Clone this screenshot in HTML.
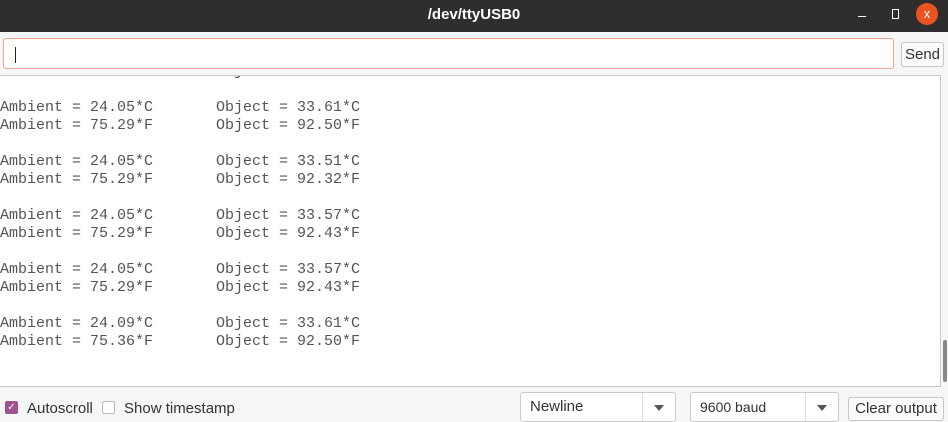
<!DOCTYPE html>
<html><head><style>
body{margin:0;width:948px;height:422px;overflow:hidden;background:#f5f6f7;font-family:"Liberation Sans",sans-serif;position:relative}
.title{position:absolute;left:0;top:0;width:948px;height:32px;background:#2f2d2d;color:#fff;font-weight:bold;font-size:15px;text-align:center;line-height:30px}
.inp{position:absolute;left:3px;top:38px;width:891px;height:31px;background:#fff;border:1px solid #f2a58e;border-radius:3px;box-sizing:border-box}
.caret{position:absolute;left:11px;top:8px;width:1px;height:16px;background:#222}
.btn{position:absolute;background:#fafafa;border:1px solid #c8c8c8;border-radius:3px;color:#333;font-size:15px;box-sizing:border-box;text-align:center}
.out{position:absolute;left:0;top:75px;width:941px;height:312px;background:#fff;border-top:1px solid #c8c8cc;border-right:1px solid #c8c8cc;border-bottom:1px solid #c8c8cc;box-sizing:border-box;overflow:hidden}
pre{margin:0;position:absolute;left:0;top:-13px;font-family:"Liberation Mono",monospace;font-size:15px;line-height:18px;color:#555}
.sb{position:absolute;left:943px;top:340px;width:4px;height:42px;background:#888;border-radius:2px}
.cb{position:absolute;top:401px;width:13px;height:13px;border-radius:2px;box-sizing:border-box}
.lbl{position:absolute;top:400px;font-size:15px;color:#333}
.sel{position:absolute;top:392px;height:30px;background:#fff;border:1px solid #ccc;border-radius:3px;box-sizing:border-box;font-size:15px;color:#333;line-height:28px;padding-left:9px}
.arr{position:absolute;right:0;top:0;width:32px;height:28px;border-left:1px solid #ddd}
.arr:after{content:"";position:absolute;left:11px;top:12px;border-left:5px solid transparent;border-right:5px solid transparent;border-top:6px solid #555}
</style></head><body>
<div class="title">/dev/ttyUSB0</div>
<div style="position:absolute;left:858px;top:16px;width:8px;height:1px;background:#fff"></div>
<div style="position:absolute;left:892px;top:9px;width:5px;height:8px;border:1px solid #fff"></div>
<div style="position:absolute;left:916px;top:3px;width:22px;height:22px;border-radius:50%;background:#e95420;color:#fff;font-size:13px;text-align:center;line-height:22px">x</div>
<div class="inp"><div class="caret"></div></div>
<div class="btn" style="left:901px;top:42px;width:43px;height:25px;line-height:23px">Send</div>
<div class="out"><pre>Ambient = 75.29*F       Object = 92.50*F

Ambient = 24.05*C       Object = 33.61*C
Ambient = 75.29*F       Object = 92.50*F

Ambient = 24.05*C       Object = 33.51*C
Ambient = 75.29*F       Object = 92.32*F

Ambient = 24.05*C       Object = 33.57*C
Ambient = 75.29*F       Object = 92.43*F

Ambient = 24.05*C       Object = 33.57*C
Ambient = 75.29*F       Object = 92.43*F

Ambient = 24.09*C       Object = 33.61*C
Ambient = 75.36*F       Object = 92.50*F</pre></div>
<div class="sb"></div>
<div class="cb" style="left:5px;background:#a1518f;color:#fff;font-size:10px;line-height:13px;text-align:center">✓</div>
<div class="lbl" style="left:27px">Autoscroll</div>
<div class="cb" style="left:102px;border:1px solid #bbb;background:#fff"></div>
<div class="lbl" style="left:124px">Show timestamp</div>
<div class="sel" style="left:520px;width:156px">Newline<div class="arr"></div></div>
<div class="sel" style="left:690px;width:149px;font-size:14px">9600 baud<div class="arr"></div></div>
<div class="btn" style="left:848px;top:397px;width:96px;height:24px;line-height:22px">Clear output</div>
</body></html>
